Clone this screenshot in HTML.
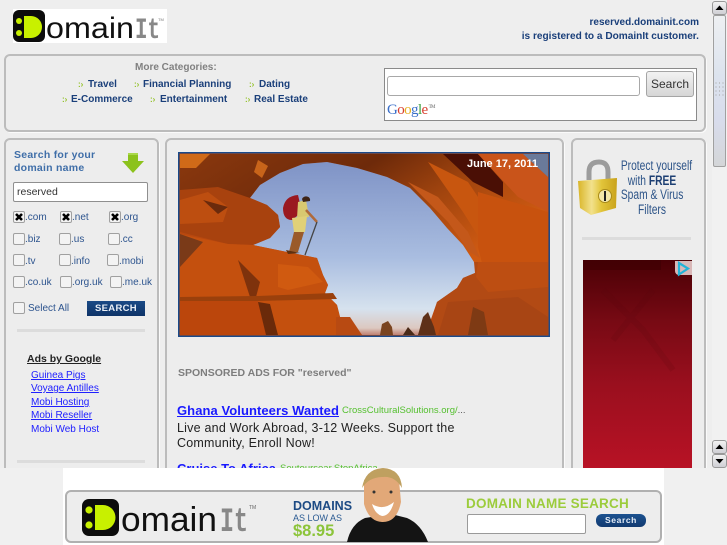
<!DOCTYPE html>
<html><head><meta charset="utf-8"><style>
html,body{margin:0;padding:0;width:727px;height:545px;overflow:hidden;background:#eee;font-family:"Liberation Sans",sans-serif}
.a{position:absolute}
.t{position:absolute;white-space:nowrap}
.panel{position:absolute;box-sizing:border-box;border:2px solid #bcbcbc;border-radius:6px;background:#ededed;box-shadow:1px 1px 0 #fafafa}
.cat{font:bold 10px "Liberation Sans",sans-serif;color:#1a3f7a}
.bul{position:absolute;color:#8fbf20;font:bold 8px "Liberation Sans",sans-serif}
.cb{position:absolute;box-sizing:border-box;width:12px;height:12px;border:1px solid #a0a0a0;border-radius:2px;background:#f3f3f3}
.lb{position:absolute;font:10px "Liberation Sans",sans-serif;color:#2d548e;white-space:nowrap}
.ad{position:absolute;font:10px "Liberation Sans",sans-serif;color:#2020ff;text-decoration:underline;white-space:nowrap}
.rule{position:absolute;height:3px;background:#dcdcdc}
.sb{position:absolute;box-sizing:border-box;left:712px;width:15px;height:14px;border:1px solid #999;border-radius:3px;background:linear-gradient(#f2f2f2,#cfcfd4)}
</style></head><body>

<!-- Logo -->
<div class="a" style="left:13px;top:9px;width:154px;height:34px;background:#fff"></div>
<svg class="a" style="left:13px;top:9px" width="154" height="34" viewBox="0 0 154 34">
<rect x="0" y="1" width="32" height="32" rx="6" fill="#0c0c0c"/>
<circle cx="6" cy="12" r="3" fill="#c8f000"/><circle cx="6" cy="24" r="3" fill="#c8f000"/>
<path d="M11 7h7a11 11 0 0 1 11 11v0a11 11 0 0 1-11 11h-7z" fill="#c8f000"/>
<text x="33" y="29" font-family="Liberation Sans" font-size="30" fill="#111" textLength="88" lengthAdjust="spacingAndGlyphs">omain</text>
<text x="122" y="29" font-family="Liberation Mono" font-size="30" font-weight="bold" fill="#888" textLength="25" lengthAdjust="spacingAndGlyphs">It</text>
<text x="148" y="12" font-family="Liberation Sans" font-size="4" fill="#777" text-anchor="middle">TM</text>
</svg>

<div class="t" style="right:28px;top:17px;font:bold 10px 'Liberation Sans',sans-serif;color:#1a3f7a">reserved.domainit.com</div>
<div class="t" style="right:28px;top:31px;font:bold 10.1px 'Liberation Sans',sans-serif;color:#1a3f7a">is registered to a DomainIt customer.</div>

<!-- Top panel -->
<div class="panel" style="left:4px;top:54px;width:702px;height:78px"></div>
<div class="t" style="left:135px;top:62px;font:bold 10px 'Liberation Sans',sans-serif;color:#808080">More Categories:</div>
<div class="bul" style="left:78px;top:80px">:›</div><div class="t cat" style="left:88px;top:79px">Travel</div>
<div class="bul" style="left:134px;top:80px">:›</div><div class="t cat" style="left:143px;top:79px">Financial Planning</div>
<div class="bul" style="left:249px;top:80px">:›</div><div class="t cat" style="left:259px;top:79px">Dating</div>
<div class="bul" style="left:62px;top:95px">:›</div><div class="t cat" style="left:71px;top:94px">E-Commerce</div>
<div class="bul" style="left:150px;top:95px">:›</div><div class="t cat" style="left:160px;top:94px">Entertainment</div>
<div class="bul" style="left:245px;top:95px">:›</div><div class="t cat" style="left:254px;top:94px">Real Estate</div>

<!-- Google box -->
<div class="a" style="left:384px;top:68px;width:313px;height:53px;box-sizing:border-box;border:1px solid #8a8a8a;background:#fff"></div>
<div class="a" style="left:387px;top:76px;width:253px;height:20px;box-sizing:border-box;border:1px solid #a8a8a8;border-radius:3px;background:#fff"></div>
<div class="a" style="left:646px;top:71px;width:48px;height:26px;box-sizing:border-box;border:1px solid #a5a5a5;border-radius:3px;background:linear-gradient(#f2f2f2,#d6d6d6);font:12px/24px 'Liberation Sans',sans-serif;color:#333;text-align:center">Search</div>
<div class="t" style="left:387px;top:102px;font:15px 'Liberation Serif',serif;letter-spacing:-.6px"><span style="color:#3a6fc9">G</span><span style="color:#d84030">o</span><span style="color:#e8b020">o</span><span style="color:#3a6fc9">g</span><span style="color:#3aa040">l</span><span style="color:#d84030">e</span><span style="font-size:5px;color:#666;vertical-align:6px;margin-left:1px">TM</span></div>

<!-- Left panel -->
<div class="panel" style="left:4px;top:138px;width:155px;height:340px"></div>
<div class="t" style="left:14px;top:149px;font:bold 10.5px/13px 'Liberation Sans',sans-serif;letter-spacing:.25px;color:#3f6ea8;white-space:normal;width:100px">Search for your domain name</div>
<svg class="a" style="left:121px;top:152px" width="24" height="22" viewBox="0 0 24 22"><path d="M7 1h10v8h6L12 21 1 9h6z" fill="#8cc21c"/><path d="M7 1h10v2H7z" fill="#a9d84a"/></svg>
<div class="a" style="left:13px;top:182px;width:135px;height:20px;box-sizing:border-box;border:1px solid #8f8f8f;border-radius:2px;background:#fff;font:10.5px/18px 'Liberation Sans',sans-serif;color:#333;padding-left:3px">reserved</div>

<div class="cb" style="left:13px;top:211px"><svg width="10" height="10" style="display:block"><path d="M2 2L8 8M8 2L2 8" stroke="#000" stroke-width="2.600"/></svg></div><div class="lb" style="left:25px;top:212px">.com</div>
<div class="cb" style="left:60px;top:211px"><svg width="10" height="10" style="display:block"><path d="M2 2L8 8M8 2L2 8" stroke="#000" stroke-width="2.600"/></svg></div><div class="lb" style="left:72px;top:212px">.net</div>
<div class="cb" style="left:109px;top:211px"><svg width="10" height="10" style="display:block"><path d="M2 2L8 8M8 2L2 8" stroke="#000" stroke-width="2.600"/></svg></div><div class="lb" style="left:121px;top:212px">.org</div>
<div class="cb" style="left:13px;top:233px"></div><div class="lb" style="left:25px;top:234px">.biz</div>
<div class="cb" style="left:59px;top:233px"></div><div class="lb" style="left:71px;top:234px">.us</div>
<div class="cb" style="left:108px;top:233px"></div><div class="lb" style="left:120px;top:234px">.cc</div>
<div class="cb" style="left:13px;top:254px"></div><div class="lb" style="left:25px;top:256px">.tv</div>
<div class="cb" style="left:59px;top:254px"></div><div class="lb" style="left:71px;top:256px">.info</div>
<div class="cb" style="left:107px;top:254px"></div><div class="lb" style="left:119px;top:256px">.mobi</div>
<div class="cb" style="left:13px;top:276px"></div><div class="lb" style="left:25px;top:277px">.co.uk</div>
<div class="cb" style="left:60px;top:276px"></div><div class="lb" style="left:72px;top:277px">.org.uk</div>
<div class="cb" style="left:110px;top:276px"></div><div class="lb" style="left:122px;top:277px">.me.uk</div>
<div class="cb" style="left:13px;top:302px"></div><div class="lb" style="left:28px;top:303px">Select All</div>
<div class="a" style="left:87px;top:301px;width:58px;height:15px;background:linear-gradient(#1a4a86,#0f3468);font:bold 9.5px/15px 'Liberation Sans',sans-serif;color:#e8eef6;text-align:center;letter-spacing:.3px">SEARCH</div>
<div class="rule" style="left:17px;top:329px;width:128px"></div>

<div class="t" style="left:27px;top:353px;font:bold 10.5px 'Liberation Sans',sans-serif;color:#222;text-decoration:underline">Ads by Google</div>
<div class="ad" style="left:31px;top:370px">Guinea Pigs</div>
<div class="ad" style="left:31px;top:383px">Voyage Antilles</div>
<div class="ad" style="left:31px;top:397px">Mobi Hosting</div>
<div class="ad" style="left:31px;top:410px">Mobi Reseller</div>
<div class="ad" style="left:31px;top:424px;text-decoration:none">Mobi Web Host</div>
<div class="rule" style="left:17px;top:460px;width:128px"></div>

<!-- Center panel -->
<div class="panel" style="left:165px;top:138px;width:399px;height:340px"></div>
<svg class="a" style="left:178px;top:152px" width="372" height="185" viewBox="0 0 372 185">
<defs>
<linearGradient id="sky" x1="0" y1="0" x2="0" y2="1"><stop offset="0" stop-color="#7f93c6"/><stop offset=".55" stop-color="#a9bde0"/><stop offset=".85" stop-color="#d6e2ee"/><stop offset=".96" stop-color="#dcc8c0"/><stop offset="1" stop-color="#c08070"/></linearGradient>
<linearGradient id="archg" x1="0" y1="0" x2="1" y2=".5"><stop offset="0" stop-color="#8a380e"/><stop offset=".45" stop-color="#6e2a0a"/><stop offset=".7" stop-color="#a0440e"/><stop offset="1" stop-color="#cf5a12"/></linearGradient>
<linearGradient id="red" x1="0" y1="0" x2="0" y2="1"><stop offset="0" stop-color="#4a0005"/><stop offset=".3" stop-color="#780a14"/><stop offset=".6" stop-color="#9a0f1e"/><stop offset="1" stop-color="#b81225"/></linearGradient>
</defs>
<rect width="372" height="185" fill="#1a4a8a"/>
<rect x="1.500" y="1.500" width="369" height="182" fill="#b8480f"/>
<!-- arch -->
<path d="M2 2H300L370 60V115L296 110 285 93 269 76 252 56 232 36 209 25 179 16 149 10 125 12 102 21 82 33 72 46 2 40z" fill="url(#archg)"/>
<path d="M2 2H32L18 16H2z" fill="#d06a18"/>
<path d="M80 8L90 14 84 26 76 20z" fill="#c8641a"/>
<path d="M230 30L260 45 290 80 302 106 292 100 270 70 250 50z" fill="#c4581a"/>
<path d="M250 10L290 30 330 90 310 100 285 60z" fill="#c8560f"/>
<path d="M300 40L370 60V115H305L300 95z" fill="#c8520e"/>
<path d="M265 2H300L325 30 325 45 295 30z" fill="#4a0f05"/>
<path d="M300 2H345L370 25V60L340 45z" fill="#c9541a"/>
<path d="M345 2H370V25z" fill="#6a7a9a"/>
<!-- sky -->
<path d="M72 46L82 33 102 21 125 12 149 10 179 16 209 25 232 36 252 56 269 76 285 93 296 110 297 121 285 126 279 136 259 150 252 170 240 183H184L162 165 159 153 147 141 150 133 145 123 139 106 109 100 75 93 92 86 102 75 100 63 89 53z" fill="url(#sky)"/>
<!-- left overhang -->
<path d="M2 38L40 35 72 46 89 53 100 63 102 75 92 86 75 93 50 92 2 80z" fill="#a8420e"/>
<path d="M2 48L30 40 50 55 45 70 2 72z" fill="#bd4e10"/>
<path d="M25 48L50 55 40 62z" fill="#6a2a0c"/>
<!-- lower left -->
<path d="M2 82L50 92 75 93 109 100 139 106 145 123 150 133 147 141 159 153 162 165 184 183H2z" fill="#c4500e"/>
<path d="M2 82L25 90 2 115z" fill="#7a3a18"/>
<path d="M60 108L82 130 78 145 72 145z" fill="#7e320c"/>
<path d="M2 145L80 144 155 141 159 147 80 149 2 149z" fill="#9a400c"/>
<path d="M2 149H80L92 183H2z" fill="#bb460c"/>
<path d="M80 150L92 152 100 183H88z" fill="#6a2a0a"/>
<path d="M100 112L130 115 145 130 110 138 100 135z" fill="#d05a10"/>
<path d="M158 165L172 165 184 183H158z" fill="#b84a12"/>
<!-- lower right -->
<path d="M297 110H370V183H252L259 150 279 136 285 126 297 121z" fill="#b24a14"/>
<path d="M300 110H370V135L310 140 298 125z" fill="#bd4e12"/>
<path d="M270 150L340 145 370 165 370 183H260z" fill="#a84514"/>
<path d="M295 155L306 160 310 183H290z" fill="#7e3a14"/>
<!-- pinnacles -->
<path d="M202 183L204 172 210 169 214 175 215 183z" fill="#7a4420"/>
<path d="M225 183L230 175 237 183z" fill="#4a2a18"/>
<path d="M240 183L245 165 250 160 256 175 258 183z" fill="#5e3018"/>
<!-- hiker -->
<path d="M105 56Q107 44 120 43L124 60 114 68Q105 68 105 56z" fill="#9a1820"/>
<path d="M120 50L128 48 131 65 119 66z" fill="#d8c870"/>
<path d="M124 47a4 3.500 0 1 1 8 2l-7 1z" fill="#3e2416"/>
<path d="M128 58L139 70" stroke="#b06a3a" stroke-width="2.500"/>
<path d="M114 66L129 64 127 80 116 80z" fill="#e0d078"/>
<path d="M116 80L126 80 120 100 111 100z" fill="#9a5a2a"/>
<path d="M139 70L127 103" stroke="#444" stroke-width="1.300"/>
<path d="M108 98L122 101 110 102z" fill="#5e3010"/>
<text x="289" y="15" font-family="Liberation Sans" font-size="11" font-weight="bold" fill="#fff">June 17, 2011</text>
</svg>

<div class="t" style="left:178px;top:367px;font:bold 10.5px 'Liberation Sans',sans-serif;color:#7d7d7d">SPONSORED ADS FOR "reserved"</div>
<div class="t" style="left:177px;top:403px;font:bold 13px 'Liberation Sans',sans-serif;color:#1a1aff;text-decoration:underline;letter-spacing:.07px">Ghana Volunteers Wanted</div>
<div class="t" style="left:342px;top:405px;font:9.5px 'Liberation Sans',sans-serif;color:#55c030">CrossCulturalSolutions.org/<span style="color:#555">...</span></div>
<div class="t" style="left:177px;top:421px;font:12.5px/15px 'Liberation Sans',sans-serif;color:#222;letter-spacing:.22px">Live and Work Abroad, 3-12 Weeks. Support the<br>Community, Enroll Now!</div>
<div class="t" style="left:177px;top:461px;font:bold 13px 'Liberation Sans',sans-serif;color:#1a1aff;text-decoration:underline">Cruise To Africa</div>
<div class="t" style="left:280px;top:463px;font:9.5px 'Liberation Sans',sans-serif;color:#55c030">Soutoursear.StopAfrica</div>

<!-- Right panel -->
<div class="panel" style="left:571px;top:138px;width:135px;height:340px"></div>
<svg class="a" style="left:577px;top:158px" width="42" height="58" viewBox="0 0 42 58">
<defs><linearGradient id="gold" x1="0" y1="0" x2="1" y2="0"><stop offset="0" stop-color="#d9b528"/><stop offset=".35" stop-color="#f2e18c"/><stop offset=".6" stop-color="#e2c53a"/><stop offset="1" stop-color="#c9a21c"/></linearGradient></defs>
<path d="M12 22V14Q12 4 22 4Q31 4 31 14V22" fill="none" stroke="#9c9c9c" stroke-width="5"/>
<path d="M1 23L40 20 39 50 14 57 3 50z" fill="url(#gold)"/>
<circle cx="28" cy="38" r="6.500" fill="#f4e8a8" stroke="#a88a1a"/>
<rect x="27" y="33" width="2" height="10" fill="#222"/>
</svg>
<div class="a" style="left:611px;top:159px;width:82px;text-align:center;font:13.5px/14.6px 'Liberation Sans',sans-serif;color:#2d5488;transform:scaleX(.76);white-space:nowrap">Protect yourself<br>with <b style="color:#1c3e72">FREE</b><br>Spam &amp; Virus<br>Filters</div>
<div class="rule" style="left:582px;top:237px;width:109px"></div>
<svg class="a" style="left:583px;top:260px" width="109" height="208" viewBox="0 0 109 208">
<rect width="109" height="208" fill="url(#red)"/>
<rect width="78" height="10" fill="#3e0004" opacity=".6"/>
<path d="M20 30L60 70 90 110M70 30L30 80" stroke="#5a0610" stroke-width="6" fill="none" opacity=".15"/>
<path d="M92 1h17v14H96a4 4 0 0 1-4-4z" fill="#d9b8b8"/>
<path d="M96 3l9 5.500-9 6z" fill="none" stroke="#22b4d8" stroke-width="2.200"/>
</svg>

<!-- Scrollbar -->
<div class="a" style="left:712px;top:0;width:15px;height:468px;background:#f1f1f1"></div>
<div class="sb" style="top:1px"></div>
<svg class="a" style="left:712px;top:1px" width="15" height="14"><path d="M3.500 9L7.500 4.500 11.500 9z" fill="#000"/></svg>
<div class="a" style="left:713px;top:15px;width:13px;height:152px;box-sizing:border-box;border:1px solid #a0a0a0;border-radius:2px;background:linear-gradient(#eef0f2,#dce3ee 40%,#d8dcec 70%,#d4d6d8)"></div>
<svg class="a" style="left:715px;top:82px" width="9" height="18"><g fill="#a8a8a8"><circle cx="1" cy="1" r=".6"/><circle cx="4.500" cy="1" r=".6"/><circle cx="8" cy="1" r=".6"/><circle cx="1" cy="5" r=".6"/><circle cx="4.500" cy="5" r=".6"/><circle cx="8" cy="5" r=".6"/><circle cx="1" cy="9" r=".6"/><circle cx="4.500" cy="9" r=".6"/><circle cx="8" cy="9" r=".6"/><circle cx="1" cy="13" r=".6"/><circle cx="4.500" cy="13" r=".6"/><circle cx="8" cy="13" r=".6"/></g></svg>
<div class="sb" style="top:440px"></div>
<svg class="a" style="left:712px;top:440px" width="15" height="14"><path d="M3.500 9L7.500 4.500 11.500 9z" fill="#000"/></svg>
<div class="sb" style="top:454px"></div>
<svg class="a" style="left:712px;top:454px" width="15" height="14"><path d="M3.500 5L7.500 9.500 11.500 5z" fill="#000"/></svg>

<!-- Bottom banner -->
<div class="a" style="left:0;top:468px;width:727px;height:77px;background:#f0f0f0"></div>
<div class="a" style="left:63px;top:468px;width:601px;height:77px;background:#fff"></div>
<div class="a" style="left:65px;top:490px;width:597px;height:53px;box-sizing:border-box;border:2px solid #b0b0b0;border-radius:6px;background:#ededed"></div>
<svg class="a" style="left:82px;top:498px" width="180" height="38" viewBox="0 0 180 38">
<rect x="0" y="1" width="37" height="37" rx="7" fill="#0c0c0c"/>
<circle cx="7" cy="12" r="3.600" fill="#c8f000"/><circle cx="7" cy="27" r="3.600" fill="#c8f000"/>
<path d="M13 7h8a12.500 12.500 0 0 1 12.500 12.500v0a12.500 12.500 0 0 1-12.500 12.500h-8z" fill="#c8f000"/>
<text x="39" y="33" font-family="Liberation Sans" font-size="34" fill="#111" textLength="96" lengthAdjust="spacingAndGlyphs">omain</text>
<text x="138" y="33" font-family="Liberation Mono" font-size="34" font-weight="bold" fill="#888" textLength="28" lengthAdjust="spacingAndGlyphs">It</text>
<text x="167" y="11" font-family="Liberation Sans" font-size="5" fill="#666">TM</text>
</svg>
<div class="t" style="left:293px;top:499px;font:bold 12.5px 'Liberation Sans',sans-serif;color:#1c4a84">DOMAINS</div>
<div class="t" style="left:293px;top:513px;font:9px 'Liberation Sans',sans-serif;color:#2a5a92">AS LOW AS</div>
<div class="t" style="left:293px;top:522px;font:bold 16.500px 'Liberation Sans',sans-serif;color:#8cc43a">$8.95</div>
<svg class="a" style="left:347px;top:468px" width="82" height="74" viewBox="0 0 82 74">
<path d="M0 74Q4 56 18 50L44 46 60 50Q74 56 81 74z" fill="#141414"/>
<path d="M17 12Q36 2 52 12L54 34Q50 54 36 54Q22 54 17 36z" fill="#e2a878"/>
<path d="M15 20Q18 1 36 0Q54 1 55 20Q48 8 36 9Q22 9 15 20z" fill="#bfa060"/>
<path d="M25 36Q36 43 47 34Q43 48 35 48Q28 46 25 36z" fill="#fff"/>
<circle cx="27" cy="24" r="1.500" fill="#333"/><circle cx="44" cy="24" r="1.500" fill="#333"/>
</svg>
<div class="t" style="left:466px;top:496px;font:bold 13.500px 'Liberation Sans',sans-serif;color:#9ccc3c;letter-spacing:.22px">DOMAIN NAME SEARCH</div>
<div class="a" style="left:467px;top:514px;width:119px;height:20px;box-sizing:border-box;border:1px solid #9a9a9a;border-radius:2px;background:#fff"></div>
<div class="a" style="left:596px;top:514px;width:50px;height:13px;border-radius:6px;background:linear-gradient(#1c5290,#123a70);font:bold 8.5px/13px 'Liberation Sans',sans-serif;color:#e4ecf6;text-align:center;letter-spacing:.6px">Search</div>
</body></html>
